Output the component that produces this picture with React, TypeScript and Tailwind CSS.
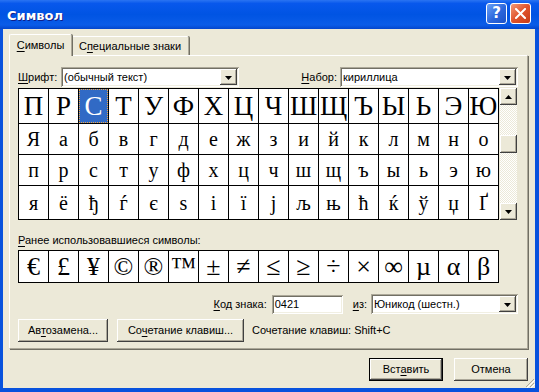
import React from "react";

const raised =
  "bg-[#ece9d8] shadow-[inset_-1px_-1px_0_#404040,inset_1px_1px_0_#ffffff,inset_-2px_-2px_0_#aca899]";
const sunken =
  "bg-white shadow-[inset_1px_1px_0_#aca899,inset_-1px_-1px_0_#ffffff,inset_2px_2px_0_#716f64,inset_-2px_-2px_0_#f1efe2]";

const rows: { chars: string[]; h: string; size: string }[] = [
  { chars: "ПРСТУФХЦЧШЩЪЫЬЭЮ".split(""), h: "h-[35px]", size: "text-[27px]" },
  { chars: "Яабвгдежзийклмно".split(""), h: "h-[31px]", size: "text-[20px]" },
  { chars: "прстуфхцчшщъыьэю".split(""), h: "h-[31px]", size: "text-[20px]" },
  {
    chars: ["я", "ё", "ђ", "ѓ", "є", "ѕ", "і", "ї", "ј", "љ", "њ", "ћ", "ќ", "ў", "џ", "Ґ"],
    h: "h-[34px]",
    size: "text-[20px]",
  },
];

const recent = ["€", "£", "¥", "©", "®", "™", "±", "≠", "≤", "≥", "÷", "×", "∞", "µ", "α", "β"];

function Down() {
  return (
    <svg width="7" height="4" viewBox="0 0 7 4">
      <polygon points="0,0 7,0 3.5,4" fill="#000" />
    </svg>
  );
}
function Up() {
  return (
    <svg width="7" height="4" viewBox="0 0 7 4">
      <polygon points="0,4 7,4 3.5,0" fill="#000" />
    </svg>
  );
}

function Select({ w, text }: { w: string; text: string }) {
  return (
    <div className={`${w} h-[20px] p-[2px] flex ${sunken}`}>
      <div className="flex-1 pl-[1px] leading-[16px] bg-white whitespace-nowrap overflow-hidden">{text}</div>
      <div className={`w-[17px] h-[16px] ${raised} flex items-center justify-center pt-[1px]`}>
        <Down />
      </div>
    </div>
  );
}

function Cell({ ch, h, size, selected }: { ch: string; h: string; size: string; selected?: boolean }) {
  return (
    <div
      className={`relative w-[30px] ${h} border-r border-b border-black flex items-center justify-center leading-none [font-family:'Liberation_Serif','Times_New_Roman',serif] ${size} ${
        selected ? "bg-[#316ac5] text-white" : "bg-white text-black"
      }`}
    >
      {ch}
      {selected && <div className="absolute inset-0 border border-dotted border-[#f0a848]" />}
    </div>
  );
}

function Button({ w, children, def }: { w: string; children: React.ReactNode; def?: boolean }) {
  return (
    <div
      className={`${w} h-[23px] flex items-center justify-center whitespace-nowrap ${
        def ? "border border-black " : ""
      }${raised}`}
    >
      {children}
    </div>
  );
}

export default function App() {
  return (
    <div className="w-[539px] h-[392px] flex flex-col bg-[#0852dd] [font-family:'Liberation_Sans',Arial,sans-serif] text-[11px] text-black overflow-hidden select-none">
      {/* Title bar */}
      <div className="h-[29px] shrink-0 flex items-start pl-[7px] pr-[8px] bg-[linear-gradient(to_bottom,#2a74f2_0%,#0858ec_12%,#0054e3_50%,#0a5ce8_86%,#0446cc_100%)]">
        <span className="mt-[6px] text-white font-bold text-[13px] [font-family:'DejaVu_Sans',sans-serif] [text-shadow:1px_1px_0_#0f1f8a]">
          Символ
        </span>
        <div className="ml-auto mt-[3px] flex gap-[3px]">
          <div className="w-[21px] h-[21px] rounded-[3px] border border-white bg-[linear-gradient(135deg,#6aa2f7,#2b66dc_55%,#1c52c8)] flex items-center justify-center text-white font-bold text-[15px] [font-family:'DejaVu_Sans',sans-serif] leading-none">
            ?
          </div>
          <div className="w-[21px] h-[21px] rounded-[3px] border border-white bg-[linear-gradient(135deg,#f29a78,#e0532c_50%,#c63b19)] flex items-center justify-center">
            <svg width="11" height="11" viewBox="0 0 11 11">
              <path d="M1 1L10 10M10 1L1 10" stroke="#fff" strokeWidth="2" strokeLinecap="square" />
            </svg>
          </div>
        </div>
      </div>

      {/* Client */}
      <div className="flex-1 ml-[3px] mr-[4px] mb-[4px] bg-[#ece9d8] relative flex flex-col">
        {/* Tabs */}
        <div className="mt-[5px] ml-[6px] h-[21px] flex items-end">
          <div className="relative z-10 w-[63px] h-[22px] -mb-[1px] bg-[#ece9d8] border-t border-l border-white rounded-t-[2px] shadow-[1px_0_0_#716f64] border-r border-r-[#aca899] flex items-center justify-center pb-[1px]">
            <span>
              <u className="underline underline-offset-[2px]">С</u>имволы
            </span>
          </div>
          <div className="w-[117px] h-[19px] bg-[#ece9d8] border-t border-white border-r border-r-[#aca899] shadow-[1px_0_0_#716f64] rounded-tr-[2px] flex items-center justify-center">
            <span>
              С<u className="underline underline-offset-[2px]">п</u>ециальные знаки
            </span>
          </div>
        </div>

        {/* Panel */}
        <div className="ml-[6px] w-[519px] h-[294px] border border-t-white border-l-white border-r-[#aca899] border-b-[#aca899] shadow-[1px_1px_0_#716f64] flex flex-col">
          {/* Font row */}
          <div className="mt-[11px] pl-[8px] pr-[9px] h-[20px] flex items-center">
            <span className="w-[43px]">
              <u className="underline underline-offset-[2px]">Ш</u>рифт:
            </span>
            <Select w="w-[178px]" text="(обычный текст)" />
            <span className="ml-auto mr-[3px]">
              <u className="underline underline-offset-[2px]">Н</u>абор:
            </span>
            <Select w="w-[178px]" text="кириллица" />
          </div>

          {/* Grid */}
          <div className="mt-[1px] pl-[8px] flex">
            <div className="border-l border-t border-black">
              {rows.map((r, ri) => (
                <div key={ri} className="flex">
                  {r.chars.map((c, ci) => (
                    <Cell key={ci} ch={c} h={r.h} size={r.size} selected={ri === 0 && ci === 2} />
                  ))}
                </div>
              ))}
            </div>
            <div className="w-[17px] h-[132px] ml-[1px] flex flex-col bg-[repeating-conic-gradient(#ffffff_0%_25%,#ece9d8_0%_50%)] bg-[length:2px_2px]">
              <div className={`h-[17px] ${raised} flex items-center justify-center`}>
                <Up />
              </div>
              <div className="h-[30px]" />
              <div className={`h-[18px] ${raised}`} />
              <div className="flex-1" />
              <div className={`h-[17px] ${raised} flex items-center justify-center`}>
                <Down />
              </div>
            </div>
          </div>

          {/* Recent label */}
          <div className="mt-[14px] pl-[8px] h-[13px] leading-[13px]">
            <u className="underline underline-offset-[2px]">Р</u>анее использовавшиеся символы:
          </div>

          {/* Recent grid */}
          <div className="mt-[3px] ml-[8px] flex self-start border-l border-t border-black">
            {recent.map((c, i) => (
              <Cell key={i} ch={c} h="h-[32px]" size="text-[26px]" />
            ))}
          </div>

          {/* Code row */}
          <div className="mt-[11px] pr-[9px] h-[20px] flex items-center justify-end">
            <span className="mr-[5px]">
              <u className="underline underline-offset-[2px]">К</u>од знака:
            </span>
            <div className={`w-[71px] h-[19px] ${sunken} pl-[3px] leading-[19px]`}>0421</div>
            <span className="ml-[10px] mr-[4px]">
              <u className="underline underline-offset-[2px]">и</u>з:
            </span>
            <Select w="w-[147px]" text="Юникод (шестн.)" />
          </div>

          {/* Buttons row */}
          <div className="mt-[5px] pl-[8px] h-[23px] flex items-center">
            <Button w="w-[90px]">
              <span>
                Ав<u className="underline underline-offset-[2px]">т</u>озамена...
              </span>
            </Button>
            <div className="ml-[9px]">
              <Button w="w-[127px]">
                <span>
                  Со<u className="underline underline-offset-[2px]">ч</u>етание клавиш...
                </span>
              </Button>
            </div>
            <span className="ml-[8px]">Сочетание клавиш: Shift+C</span>
          </div>
        </div>

        {/* Bottom buttons */}
        <div className="mt-[9px] pr-[7px] flex justify-end gap-[11px]">
          <Button w="w-[74px]" def>
            <span>
              Вст<u className="underline underline-offset-[2px]">а</u>вить
            </span>
          </Button>
          <Button w="w-[74px]">Отмена</Button>
        </div>

        {/* Resize grip */}
        <svg className="absolute right-0 bottom-0" width="12" height="12" viewBox="0 0 12 12">
          <path d="M11 3L3 11M11 7L7 11" stroke="#aca899" strokeWidth="1" />
          <path d="M12 4L4 12M12 8L8 12" stroke="#ffffff" strokeWidth="1" />
        </svg>
      </div>
    </div>
  );
}
